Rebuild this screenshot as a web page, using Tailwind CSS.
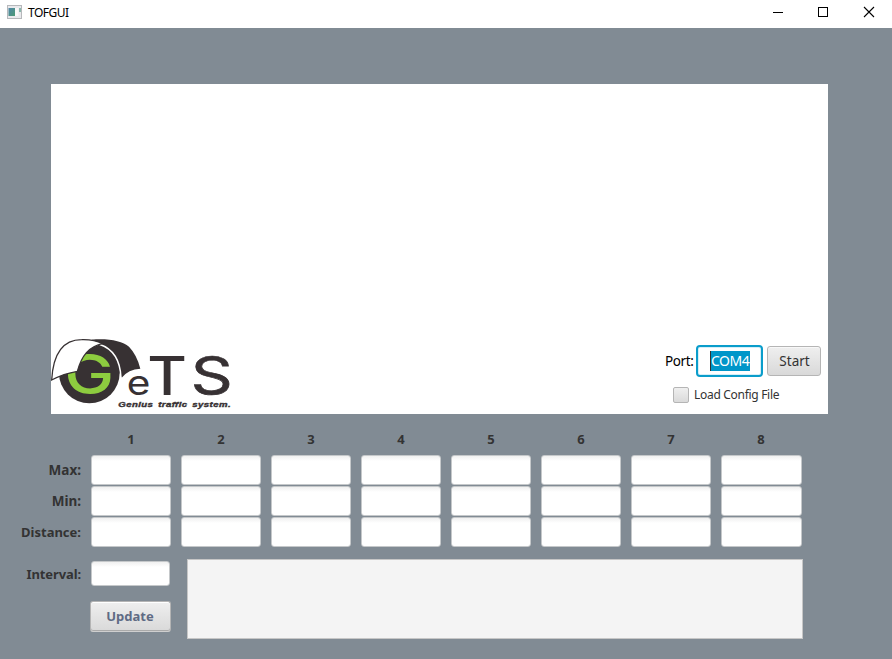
<!DOCTYPE html>
<html lang="en">
<head>
<meta charset="utf-8">
<title>TOFGUI</title>
<script src="https://cdn.jsdelivr.net/npm/@tailwindcss/browser@4"></script>
</head>
<body class="w-[892px] h-[659px] overflow-hidden bg-[#818b94] font-['Noto_Sans',sans-serif] text-[14px] text-[#333]">
<header class="h-7 bg-white flex items-center text-black">
  <svg class="ml-[7px] -mt-[4px]" width="15" height="14" viewBox="0 0 15 14">
    <defs><linearGradient id="pane" x2="1" y2="1"><stop stop-color="#4f86a8"/><stop offset="1" stop-color="#4c9a74"/></linearGradient></defs>
    <rect x=".5" y=".5" width="14" height="13" fill="#e9e9ec" stroke="#b6b8bb"/>
    <rect x="1.500" y="3" width="6.500" height="8" fill="url(#pane)"/>
    <rect x="8" y="3" width="3.500" height="8" fill="#f8f8f8"/>
    <rect x="12" y="3" width="2" height="4" fill="#8cb8ae"/>
  </svg>
  <span class="ml-[6px] -mt-[3px] text-[12px] leading-[18px] tracking-[-0.5px]">TOFGUI</span>
  <svg class="ml-auto mr-[17px] -mt-[4px]" width="103" height="12" viewBox="0 0 103 12" fill="none" stroke="#000">
    <path d="M1 6.500h10M46.500 1.500h9v9h-9z" shape-rendering="crispEdges"/>
    <path d="M92 1l10 10M102 1L92 11" stroke-width="1.1"/>
  </svg>
</header>

<main>
  <section class="mt-14 ml-[51px] w-[777px] h-[330px] bg-white flex items-end justify-between">
    <svg width="194" height="84" viewBox="18 0 582 252" font-family="Inter, sans-serif">
      <path d="M140 29C190 25 232 33 252 50Q276 75 286 116Q250 118 230 143L195 70Z" fill="#373133"/>
      <circle cx="133" cy="129" r="91" fill="#373133"/>
      <path d="M163 43C205 57 226 92 228 144" fill="none" stroke="#fff" stroke-width="4.500"/>
      <text x="58" y="193" font-size="166" font-weight="500" fill="#8dcc3f" textLength="150" lengthAdjust="spacingAndGlyphs">G</text>
      <path d="M20 150C24 82 45 29 110 29Q148 28 172 41C132 50 110 76 97 124Q56 131 20 150Z" fill="#fff" stroke="#373133" stroke-width="4"/>
      <g fill="#373133">
        <text x="245" y="194" font-size="102" textLength="71" lengthAdjust="spacingAndGlyphs">e</text>
        <text x="307" y="194" font-size="159" font-weight="500" textLength="119" lengthAdjust="spacingAndGlyphs">T</text>
        <text x="437" y="193" font-size="155" font-weight="400" stroke="#373133" stroke-width="2" textLength="126" lengthAdjust="spacingAndGlyphs">S</text>
        <text x="220" y="230" font-family="Liberation Sans, sans-serif" font-size="23" font-weight="bold" font-style="italic" stroke="#373133" stroke-width="1.2" word-spacing="4" letter-spacing="1" textLength="338" lengthAdjust="spacingAndGlyphs">Genius traffic system.</text>
      </g>
    </svg>
    <div class="w-[164px] h-[69px] text-black">
      <div class="flex items-center h-[32px]">
        <span class="w-[32px] pl-px whitespace-nowrap text-[13.500px] tracking-[-0.4px]">Port:</span>
        <div class="w-[67px] h-[32px] rounded-[4px] border-2 border-[#0a9dcb] bg-white shadow-[inset_0_0_0_1px_#d5eff8] flex items-center pl-[12px]"><span class="w-[40px] h-5 leading-5 bg-[#0096c9] text-white border-l border-[#333] text-[14px] tracking-[-0.5px] whitespace-nowrap">COM4</span></div>
        <div class="ml-[4px] w-[54px] h-[30px] pl-px rounded-[3px] border border-[#b5b5b5] bg-linear-to-b from-[#efefef] to-[#d9d9d9] shadow-[inset_0_1px_0_#f8f8f8] text-[#333] text-[13.500px] flex items-center justify-center">Start</div>
      </div>
      <div class="flex items-center mt-[10px] ml-[9px] h-4">
        <div class="w-4 h-4 rounded-[2px] border border-[#b5b5b5] bg-linear-to-b from-[#efefef] to-[#dadada]"></div>
        <span class="ml-[5px] text-[12px] tracking-[-0.3px] text-[#333] whitespace-nowrap">Load Config File</span>
      </div>
    </div>
  </section>

  <section class="mt-[14px] font-bold text-[13px]">
    <div class="ml-[91px] grid grid-cols-[repeat(8,80px)] gap-x-[10px] h-[27px] leading-[22px] text-center">
      <span>1</span><span>2</span><span>3</span><span>4</span><span>5</span><span>6</span><span>7</span><span>8</span>
    </div>
    <div id="readings" class="grid gap-y-px"></div>
  </section>

  <section class="mt-3 flex h-20 text-[13px] font-bold">
    <div class="w-[187px]">
      <div class="flex items-center pt-[2px]">
        <span class="w-[91px] h-[25px] leading-[27px] pr-[10px] text-right tracking-[-0.1px]">Interval:</span>
        <div class="w-[79px] h-[25px] rounded-[3px] border border-[#c5c8ca] bg-linear-to-b from-[#f0f0f0] to-white to-[5px]"></div>
      </div>
      <div class="mt-[15px] ml-[90px] w-[81px] h-[31px] pr-px rounded-[3px] border border-[#b4b4b4] border-b-[#cfcfcf] bg-linear-to-b from-[#efefef] to-[#d9d9d9] shadow-[inset_0_1px_0_#fff,inset_0_-1px_0_#aaa] flex items-center justify-center text-[#5f6b84]">Update</div>
    </div>
    <div class="w-[616px] h-20 border border-[#c6c6c6] bg-[#f4f4f4]"></div>
  </section>
</main>
<script>
  const field = last => `<div class="h-[30px] ${last ? 'w-[81px]' : 'w-[80px]'} rounded-[3px] border border-[#c5c8ca] bg-linear-to-b from-[#f0f0f0] to-white to-[5px]"></div>`;
  const labels = [['Max:', 'text-[13.500px]'], ['Min:', 'text-[13.500px]'], ['Distance:', 'text-[13px]']];
  document.getElementById('readings').innerHTML = labels.map(([label, size]) =>
    `<div class="flex items-center h-[30px]"><span class="w-[91px] h-[30px] leading-[30px] pr-[10px] text-right ${size}">${label}</span><div class="flex gap-[10px]">${Array.from({length: 8}, (_, i) => field(i === 7)).join('')}</div></div>`).join('');
</script>
</body>
</html>
